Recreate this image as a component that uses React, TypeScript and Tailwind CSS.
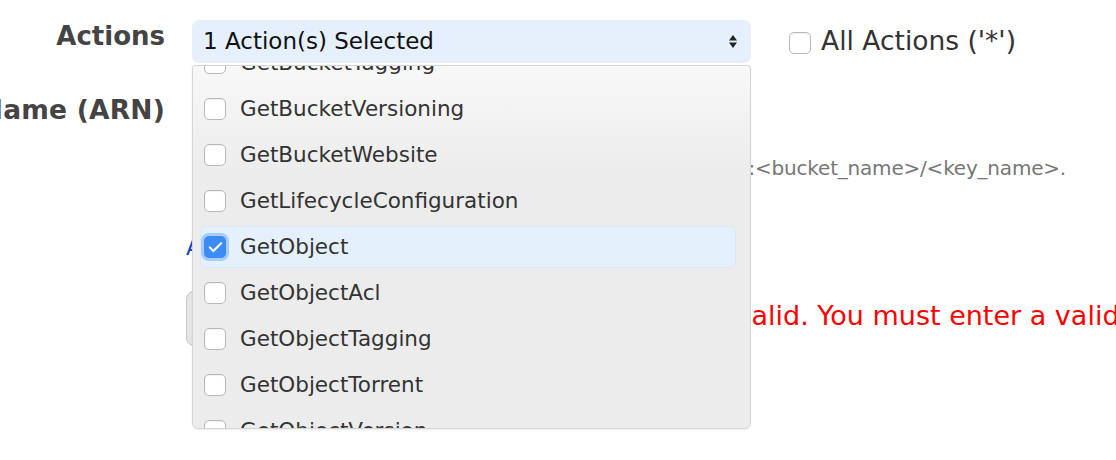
import { Check } from "lucide-react";

const actions = [
  "GetBucketTagging",
  "GetBucketVersioning",
  "GetBucketWebsite",
  "GetLifecycleConfiguration",
  "GetObject",
  "GetObjectAcl",
  "GetObjectTagging",
  "GetObjectTorrent",
  "GetObjectVersion",
];

const selected = ["GetObject"];

function Box({ checked }: { checked?: boolean }) {
  if (checked) {
    return (
      <span className="flex items-center justify-center w-[22px] h-[22px] rounded-[5px] bg-[#3b8cf5] ring-[3px] ring-[#a8cbfa] shrink-0">
        <Check className="w-[17px] h-[17px] text-white" strokeWidth={3} />
      </span>
    );
  }
  return (
    <span className="block w-[22px] h-[22px] rounded-[5px] bg-white border border-[#b8b8b8] shadow-[inset_0_1px_1px_rgba(0,0,0,0.06)] shrink-0" />
  );
}

function SortArrows() {
  return (
    <svg width="10" height="15" viewBox="0 0 10 15" className="text-[#222]">
      <path d="M5 1 L9 6.5 L1 6.5 Z" fill="currentColor" />
      <path d="M1 8.5 L9 8.5 L5 14 Z" fill="currentColor" />
    </svg>
  );
}

function ActionsDropdown() {
  return (
    <div className="absolute left-0 top-[calc(100%+2px)] w-full h-[364px] overflow-hidden rounded-b-[6px] rounded-t-[3px] border border-[#d6d6d6] bg-gradient-to-b from-[#f8f8f8] to-[#ececec] to-[30%] shadow-[0_1px_2px_rgba(0,0,0,0.08)]">
      <ul className="-mt-[26px]">
        {actions.map((a) => {
          const on = selected.includes(a);
          return (
            <li key={a} className="h-[46px] px-2 py-[2px]">
              <div
                className={
                  "flex items-center gap-[14px] h-full w-[536px] pl-[3px] rounded-[6px] " +
                  (on ? "bg-[#e5f0fd] border border-[#d9e8fb] -ml-px" : "")
                }
              >
                <Box checked={on} />
                <span className="text-[21.5px] text-[#333] leading-none -mt-[1px]">{a}</span>
              </div>
            </li>
          );
        })}
      </ul>
    </div>
  );
}

export default function App() {
  return (
    <div className="relative w-[1116px] h-[460px] overflow-hidden bg-white font-['DejaVu_Sans',sans-serif]">
      <div className="grid grid-cols-[165px_1fr] gap-x-[27px] pt-[20px]">
        {/* Actions row */}
        <div className="h-[43px] flex items-center justify-end pb-[10px]">
          <span className="text-[26px] font-bold text-[#444] whitespace-nowrap">Actions</span>
        </div>
        <div className="flex items-center">
          <div className="relative w-[559px] h-[43px] z-10 shrink-0">
            <div className="flex items-center justify-between h-full pl-[11px] pr-[13px] rounded-[7px] bg-[#e6f0fc]">
              <span className="text-[23px] text-[#111] leading-none">1 Action(s) Selected</span>
              <SortArrows />
            </div>
            <ActionsDropdown />
          </div>
          <label className="flex items-center gap-[10px] ml-[38px] pt-[2px]">
            <Box />
            <span className="text-[26.5px] text-[#333] leading-none whitespace-nowrap -mt-[3px]">All Actions ('*')</span>
          </label>
        </div>

        {/* ARN row */}
        <div className="h-[43px] mt-[25px] flex items-center justify-end overflow-visible">
          <span className="text-[26.5px] tracking-[0.2px] font-bold text-[#444] whitespace-nowrap">Amazon Resource Name (ARN)</span>
        </div>
        <div className="mt-[25px]">
          <div className="h-[43px] w-[559px] rounded-[6px] border border-[#ccc] bg-white" />
          <p className="mt-[25px] w-[874px] text-right whitespace-nowrap text-[20px] tracking-[-0.2px] leading-[24px] text-[#777]">
            ARN should follow the format arn:aws:s3:::&lt;bucket_name&gt;/&lt;key_name&gt;.
          </p>
        </div>
      </div>

      {/* lower section, partly under the dropdown */}
      <div className="pl-[186px] mt-[56px]">
        <a className="text-[22px] leading-[24px] text-[#1b3fb8] whitespace-nowrap">Add Conditions (optional)</a>
        <div className="flex items-center mt-[29px]">
          <button className="shrink-0 h-[55px] w-[180px] rounded-[8px] border border-[#c8c8c8] bg-[#e6e6e6] text-[20px] text-[#333]">
            Add Statement
          </button>
          <span className="shrink-0 ml-[18px] -mt-[5px] text-[27px] text-[#ff0000] whitespace-nowrap">
            The ARN you entered is invalid. You must enter a valid ARN.
          </span>
        </div>
      </div>
    </div>
  );
}
